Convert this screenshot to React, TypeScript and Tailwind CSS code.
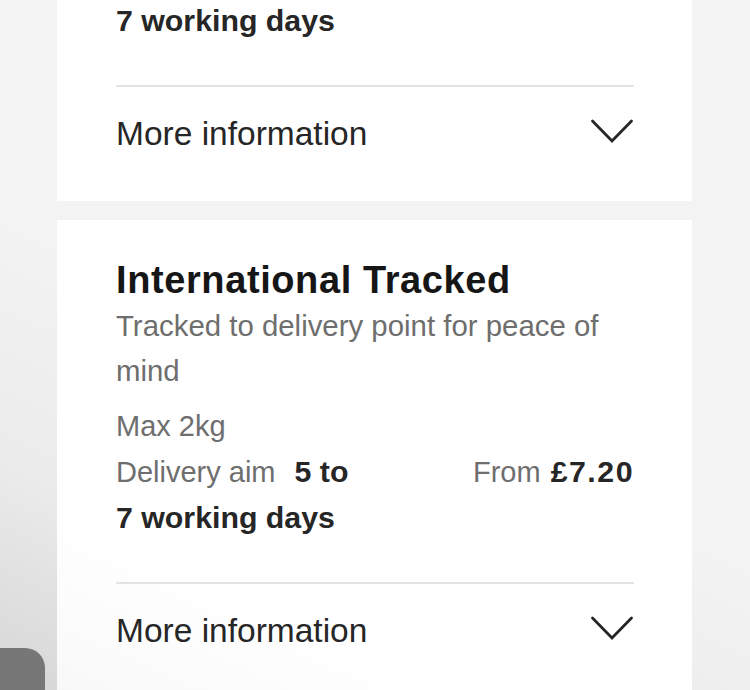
import React from "react";

const font = { fontFamily: '"Liberation Sans", Arial, sans-serif' };

function Chevron() {
  return (
    <svg width="44" height="26" viewBox="0 0 44 26" className="mt-[4px] shrink-0">
      <path d="M2.5 3 L22 23 L41.5 3" fill="none" stroke="#262626" strokeWidth="2.8" strokeLinecap="round" strokeLinejoin="miter" />
    </svg>
  );
}

function MoreInfo() {
  return (
    <div className="flex items-start justify-between">
      <span className="text-[33.5px] leading-[40px] text-[#262626]">More information</span>
      <Chevron />
    </div>
  );
}

export default function App() {
  return (
    <div
      className="relative h-[690px] w-[750px] overflow-hidden bg-[linear-gradient(25deg,#d6d6d6_0%,#ebebeb_22%,#f3f3f3_45%,#f3f3f3_100%)]"
      style={font}
    >
      <div className="flex flex-col gap-[19px] pl-[57px] pr-[58px]">
        {/* Card 1 (top cut off) */}
        <div className="bg-white pb-[47px] pl-[59px] pr-[58px]">
          <div className="-mt-[2px] text-[30.3px] font-bold leading-[45px] text-[#262626]">7 working days</div>
          <div className="mt-[42px] h-[2px] bg-[#e3e3e3]" />
          <div className="mt-[27px]">
            <MoreInfo />
          </div>
        </div>

        {/* Card 2 */}
        <div className="h-[600px] bg-[linear-gradient(25deg,#efefef_0%,#fafafa_18%,#ffffff_35%,#ffffff_100%)] pt-[37px] pl-[59px] pr-[58px]">
          <h2 className="text-[38px] font-bold leading-[46px] tracking-[0.6px] text-[#161616]">International Tracked</h2>
          <p className="text-[29.4px] leading-[45px] text-[#6e6e6e]">
            Tracked to delivery point for peace of
            <br />
            mind
          </p>
          <p className="mt-[11px] text-[29px] leading-[45px] text-[#6e6e6e]">Max 2kg</p>
          <div className="flex items-start justify-between">
            <div className="text-[29px] leading-[45px] text-[#6e6e6e]">
              Delivery aim
              <span className="ml-[19px] text-[30.3px] font-bold text-[#262626]">5 to</span>
              <br />
              <span className="text-[30.3px] font-bold text-[#262626]">7 working days</span>
            </div>
            <div className="text-[29px] leading-[45px] text-[#6e6e6e]">
              From<span className="ml-[10px] text-[30.3px] font-bold tracking-[1.5px] text-[#262626]">£7.20</span>
            </div>
          </div>
          <div className="mt-[41px] h-[2px] bg-[#e3e3e3]" />
          <div className="mt-[27px]">
            <MoreInfo />
          </div>
        </div>
      </div>

      {/* floating grey element bottom-left */}
      <div className="absolute left-0 top-[648px] h-[60px] w-[45px] rounded-tr-[20px] bg-[#777777]" />
    </div>
  );
}
